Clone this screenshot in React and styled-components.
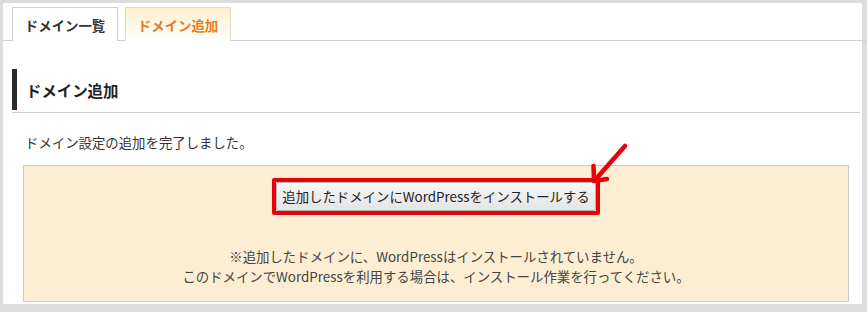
import React from "react"
import styled, { createGlobalStyle } from "styled-components"

const GlobalStyle = createGlobalStyle`
  html, body {
    margin: 0;
    padding: 0;
    background: #dcdcdc;
  }
  body {
    font-family: "Noto Sans CJK JP", "Noto Sans", sans-serif;
    color: #333;
  }
`

function App() {
  return (
    <>
      <GlobalStyle />
      <Frame>
        <Panel>
          <TabBar>
            <Tab>ドメイン一覧</Tab>
            <Tab active>ドメイン追加</Tab>
          </TabBar>
          <Body>
            <HeadingWrap>
              <Heading>ドメイン追加</Heading>
            </HeadingWrap>
            <Message>ドメイン設定の追加を完了しました。</Message>
            <NoticeBox>
              <Highlight>
                <InstallButton>追加したドメインにWordPressをインストールする</InstallButton>
                <Arrow width="40" height="42" viewBox="0 0 40 42">
                  <path
                    d="M35 4 L5 38 M3.5 24 L4 39 L17 37"
                    fill="none"
                    stroke="#e8000b"
                    strokeWidth="4.5"
                    strokeLinecap="round"
                    strokeLinejoin="round"
                  />
                </Arrow>
              </Highlight>
              <Note>
                ※追加したドメインに、WordPressはインストールされていません。
                <br />
                このドメインでWordPressを利用する場合は、インストール作業を行ってください。
              </Note>
            </NoticeBox>
          </Body>
        </Panel>
      </Frame>
    </>
  )
}

export default App

const Frame = styled.div`
  width: 867px;
  height: 312px;
  box-sizing: border-box;
  padding: 3px 5px 8px 3px;
  background: #dcdcdc;
`

const Panel = styled.div`
  height: 100%;
  background: #fff;
  padding-top: 4px;
  box-sizing: border-box;
`

const TabBar = styled.div`
  display: flex;
  gap: 7px;
  padding-left: 9px;
  border-bottom: 1px solid #cfcfcf;
  margin-right: -5px;
`

const Tab = styled.div`
  width: 106px;
  height: 34px;
  box-sizing: border-box;
  display: flex;
  align-items: center;
  justify-content: center;
  border: 1px solid ${(p) => (p.active ? "#e6dcc4" : "#cfcfcf")};
  border-bottom: none;
  margin-bottom: -1px;
  font-size: 13.4px;
  font-weight: bold;
  color: ${(p) => (p.active ? "#e67a22" : "#333")};
  background: ${(p) =>
    p.active ? "linear-gradient(180deg, #fdefc9 0%, #fff 100%)" : "#fff"};
`

const Body = styled.div`
  padding: 0 2px 0 9px;
`

const HeadingWrap = styled.div`
  margin-top: 28px;
  padding-bottom: 2px;
  border-bottom: 1px solid #cfcfcf;
`

const Heading = styled.h2`
  margin: 0;
  height: 41px;
  box-sizing: border-box;
  display: flex;
  align-items: center;
  border-left: 5px solid #2c2c2c;
  padding-left: 9px;
  font-size: 15.4px;
  font-weight: bold;
  color: #222;
`

const Message = styled.p`
  margin: 20px 0 0 13px;
  font-size: 13.4px;
  line-height: 18px;
  color: #333;
`

const NoticeBox = styled.div`
  margin: 14px 11px 0 11px;
  height: 137px;
  box-sizing: border-box;
  background: #fdeed3;
  border: 1px solid #cfcac0;
  display: flex;
  flex-direction: column;
  align-items: center;
  padding-top: 12px;
`

const Highlight = styled.div`
  position: relative;
  border: 4px solid #e8000b;
  border-radius: 2px;
  display: flex;
`

const InstallButton = styled.button`
  font-family: "Noto Sans CJK JP", "Noto Sans", sans-serif;
  font-size: 13.4px;
  line-height: 27px;
  height: 29px;
  padding: 0 5px;
  color: #222;
  border: 1px solid #b5b5b5;
  border-radius: 2px;
  background: linear-gradient(180deg, #f7f7f7 0%, #e4e4e4 100%);
  white-space: nowrap;
`

const Arrow = styled.svg`
  position: absolute;
  left: calc(100% - 6px);
  top: -40px;
`

const Note = styled.p`
  margin: 31px 0 0 0;
  text-align: center;
  font-size: 13.4px;
  line-height: 20px;
  color: #444;
`
